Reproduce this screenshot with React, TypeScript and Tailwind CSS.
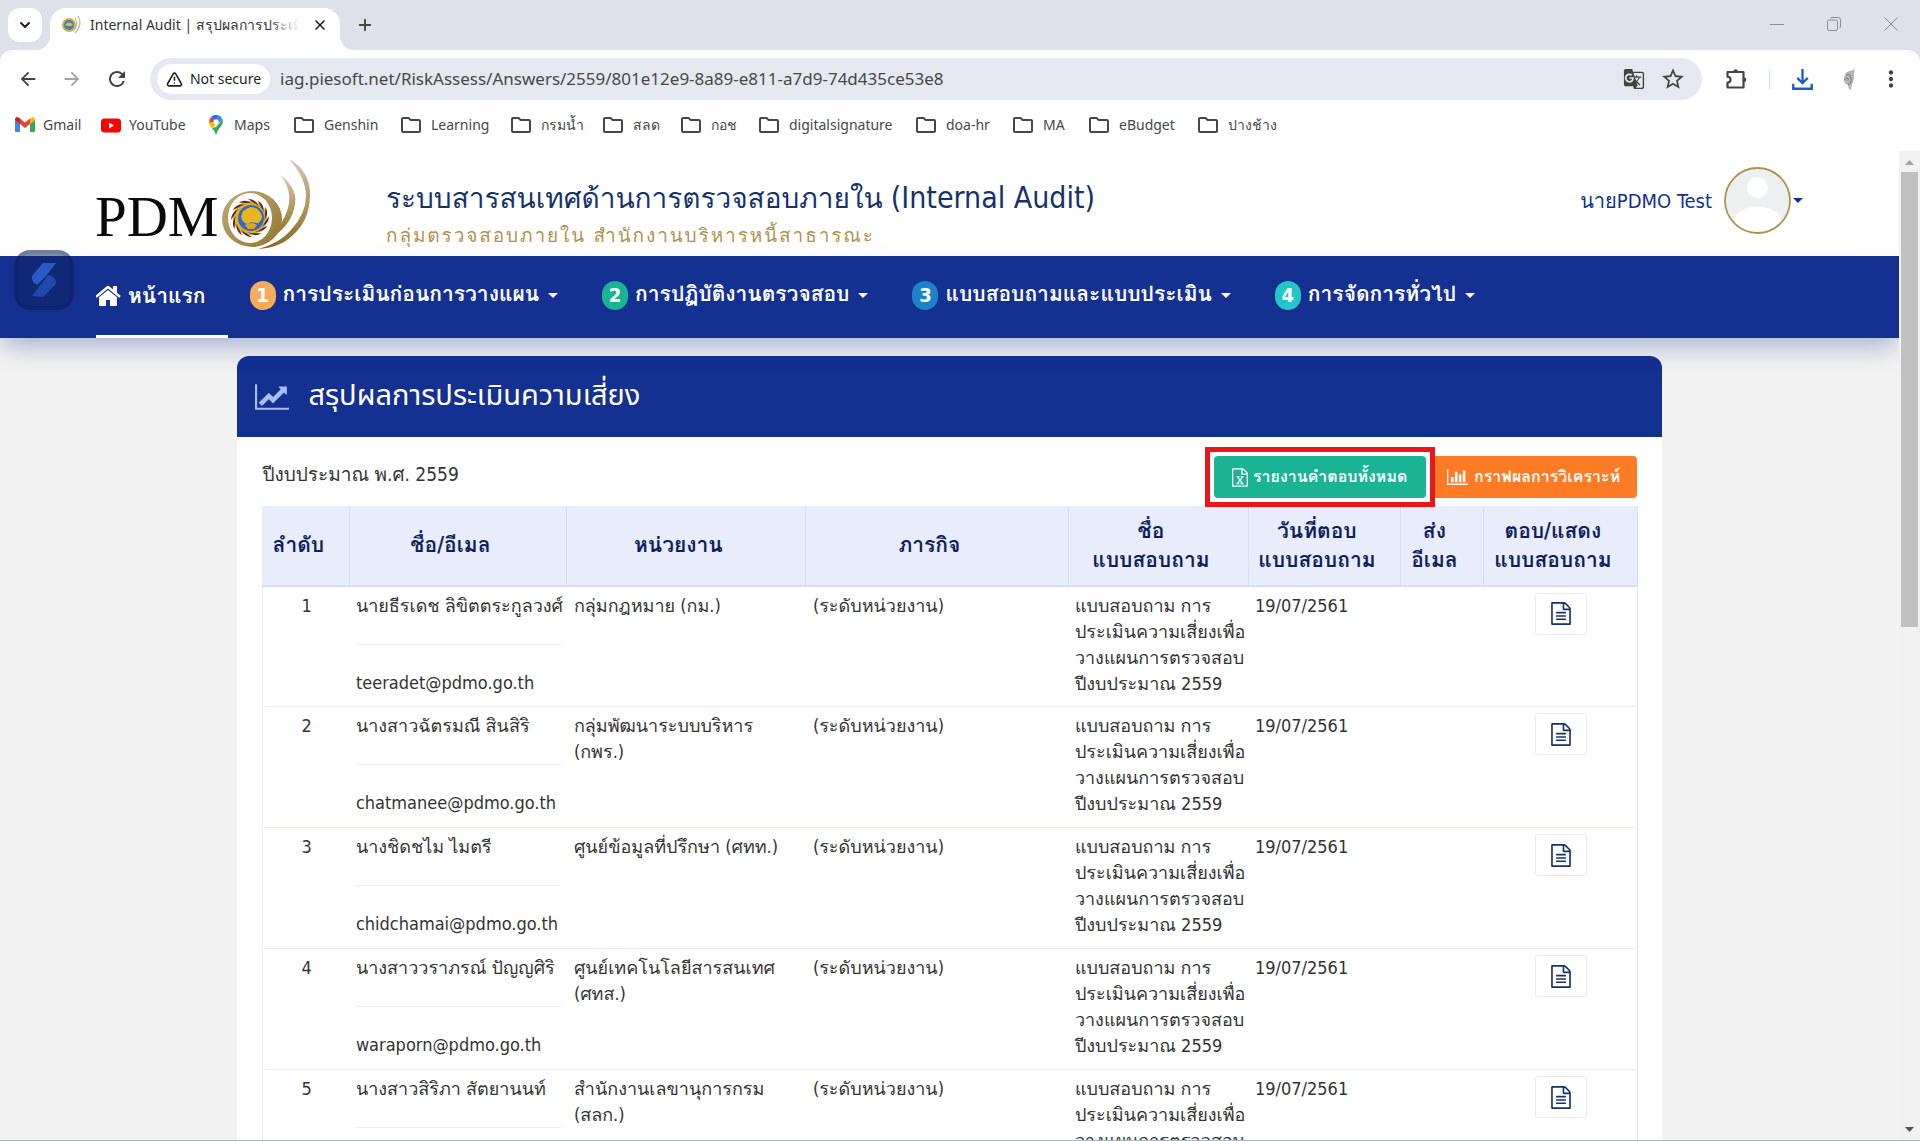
import type { ReactNode } from "react";
import {
  MdArrowBack,
  MdArrowForward,
  MdGTranslate,
  MdMoreVert,
  MdOutlineFolder,
  MdRefresh,
  MdStarBorder,
} from "react-icons/md";
import { LuTriangleAlert, LuX, LuPlus, LuChevronDown } from "react-icons/lu";

const UI = "font-['Noto_Sans',sans-serif]";
const PAGE = "font-['DejaVu_Sans_Condensed','Loma',sans-serif]";

const FILE_OUTLINE =
  "M1596 380q28 28 48 76t20 88v1152q0 40-28 68t-68 28h-1344q-40 0-68-28t-28-68v-1600q0-40 28-68t68-28h896q40 0 88 20t76 48zm-444-244v376h376q-10-29-22-41l-313-313q-12-12-41-22zm384 1528v-1024h-416q-40 0-68-28t-28-68v-416h-768v1536h1280z";

function Glyph({ d, box, className }: { d: string; box: string; className: string }) {
  return (
    <svg viewBox={box} className={className} fill="currentColor" aria-hidden="true">
      <path d={d} />
    </svg>
  );
}

const HomeIcon = () => (
  <Glyph
    box="64 190 1664 1300"
    className="h-[22px] w-[26px]"
    d="M1408 992v480q0 26-19 45t-45 19h-384v-384h-256v384h-384q-26 0-45-19t-19-45v-480q0-1 .5-3t.5-3l575-474 575 474q1 2 1 6zm223-69l-62 74q-8 9-21 11h-3q-13 0-21-7l-692-577-692 577q-12 8-24 7-13-2-21-11l-62-74q-8-10-7-23.5t11-21.5l719-599q32-26 76-26t76 26l244 204v-195q0-14 9-23t23-9h192q14 0 23 9t9 23v408l219 182q10 8 11 21.5t-7 23.5z"
  />
);
const LineChartIcon = () => (
  <Glyph
    box="0 128 2048 1536"
    className="h-[26px] w-[34px] text-[#a9bdf5]"
    d="M2048 1536v128h-2048v-1536h128v1408h1920zm-128-1248v435q0 21-19.5 29.5t-35.5-7.5l-121-121-633 633q-10 10-23 10t-23-10l-233-233-416 416-192-192 585-585q10-10 23-10t23 10l233 233 464-464-121-121q-16-16-7.5-35.5t29.5-19.5h435q14 0 23 9t9 23z"
  />
);
const ExcelIcon = () => (
  <Glyph
    box="128 0 1536 1792"
    className="h-[19px] w-4"
    d={
      FILE_OUTLINE +
      "m-979-234v106h281v-106h-75l103-161q5-7 10-16.5t7.5-13.5 3.5-4h2q1 4 5 10 2 4 4.5 7.5t6 8 6.5 8.5l107 161h-76v106h291v-106h-68l-192-273 195-282h67v-107h-279v107h74l-103 159q-4 7-10 16.5t-9 13.5l-2 3h-2q-1-4-5-10-6-11-17-23l-106-159h76v-107h-290v107h68l189 272-194 283h-68z"
    }
  />
);
const BarChartIcon = () => (
  <Glyph
    box="0 128 2048 1536"
    className="h-4 w-[21px]"
    d="M640 896v512h-256v-512h256zm384-512v1024h-256v-1024h256zm1024 1152v128h-2048v-1536h128v1408h1920zm-640-896v768h-256v-768h256zm384-384v1152h-256v-1152h256z"
  />
);
const FileTextIcon = () => (
  <Glyph
    box="128 0 1536 1792"
    className="h-[23px] w-5"
    d={
      FILE_OUTLINE +
      "m-1024-864q0-14 9-23t23-9h704q14 0 23 9t9 23v64q0 14-9 23t-23 9h-704q-14 0-23-9t-9-23v-64zm736 224q14 0 23 9t9 23v64q0 14-9 23t-23 9h-704q-14 0-23-9t-9-23v-64q0-14 9-23t23-9h704zm0 256q14 0 23 9t9 23v64q0 14-9 23t-23 9h-704q-14 0-23-9t-9-23v-64q0-14 9-23t23-9h704z"
    }
  />
);

const Caret = () => (
  <svg viewBox="0 0 10 5" className="h-[5px] w-[10px]" fill="currentColor" aria-hidden="true">
    <path d="M0 0h10L5 5z" />
  </svg>
);

function Favicon() {
  return (
    <svg viewBox="0 0 20 20" className="size-5 shrink-0" aria-hidden="true">
      <circle cx="8" cy="10" r="7" fill="#c9b548" />
      <circle cx="8" cy="10" r="5" fill="#4a7fb5" />
      <path d="M4 10q4-5 8 0q-4 2-8 0z" fill="#e0c23a" />
      <path d="M14 3q4 7-2 13M17 1q5 9-3 17" fill="none" stroke="#cdb98a" strokeWidth="1.3" />
    </svg>
  );
}

function TabStrip() {
  return (
    <div className="flex h-[50px] shrink-0 items-start bg-[#dee1e9] pl-2 pt-2">
      <button aria-label="Search tabs" className="flex size-[34px] items-center justify-center rounded-xl bg-white">
        <LuChevronDown className="size-4 text-[#1f1f1f]" strokeWidth={3} />
      </button>
      <div className="relative ml-2 flex h-[42px] w-[290px] items-center rounded-t-2xl bg-white pl-[11px] pr-3 pb-2">
        <svg viewBox="0 0 14 14" className="absolute -left-[14px] bottom-0 size-[14px]" aria-hidden="true">
          <path d="M14 0v14H0A14 14 0 0 0 14 0z" fill="#fff" />
        </svg>
        <svg viewBox="0 0 14 14" className="absolute -right-[14px] bottom-0 size-[14px]" aria-hidden="true">
          <path d="M0 0v14h14A14 14 0 0 1 0 0z" fill="#fff" />
        </svg>
        <Favicon />
        <div className="relative ml-[9px] w-[210px] overflow-hidden whitespace-nowrap text-sm leading-8 text-[#333]">
          Internal Audit | สรุปผลการประเมินความเสี่ยง
          <div className="absolute inset-y-0 right-0 w-8 bg-linear-to-r from-white/0 to-white" />
        </div>
        <button aria-label="Close tab" className="ml-3">
          <LuX className="size-4 text-[#1f1f1f]" strokeWidth={2.5} />
        </button>
      </div>
      <button aria-label="New tab" className="ml-4 mt-2">
        <LuPlus className="size-[18px] text-[#444]" strokeWidth={2.5} />
      </button>
      <div className="ml-auto mr-[22px] mt-[9px] flex items-center gap-[43px] text-[#8a8c91]">
        <button aria-label="Minimize">
          <svg viewBox="0 0 14 14" className="size-[14px]" aria-hidden="true">
            <path d="M0 7.5h14" stroke="currentColor" />
          </svg>
        </button>
        <button aria-label="Restore">
          <svg viewBox="0 0 14 14" className="size-[14px]" fill="none" stroke="currentColor" aria-hidden="true">
            <rect x=".5" y="3" width="10" height="10.5" rx="1.5" />
            <path d="M3 1.500q.5-1 2-1h6q2.500 0 2.500 2.500v6q0 1.500-1 2" />
          </svg>
        </button>
        <button aria-label="Close">
          <svg viewBox="0 0 14 14" className="size-[14px]" fill="none" stroke="currentColor" aria-hidden="true">
            <path d="M.5 .5l13 13M13.500 .5l-13 13" />
          </svg>
        </button>
      </div>
    </div>
  );
}

function Toolbar() {
  return (
    <div className="flex h-[58px] shrink-0 items-center rounded-t-xl bg-white pl-[17px] text-[#444]">
      <button aria-label="Back">
        <MdArrowBack className="size-[22px]" />
      </button>
      <button aria-label="Forward" className="ml-[22px] text-[#a5a5a5]">
        <MdArrowForward className="size-[22px]" />
      </button>
      <button aria-label="Reload" className="ml-[22px]">
        <MdRefresh className="size-6" />
      </button>
      <div className="ml-[21px] flex h-[42px] flex-1 items-center rounded-full bg-[#e5e7f1] pl-[7px] pr-4">
        <button className="flex h-[30px] w-[113px] shrink-0 items-center justify-center gap-[7px] rounded-full bg-white text-sm text-[#1f1f1f]">
          <LuTriangleAlert className="size-[17px]" strokeWidth={2.2} />
          Not secure
        </button>
        <input
          aria-label="Address"
          readOnly
          className="ml-[10px] min-w-0 flex-1 bg-transparent text-[17px] text-[#474747] outline-none"
          value="iag.piesoft.net/RiskAssess/Answers/2559/801e12e9-8a89-e811-a7d9-74d435ce53e8"
        />
        <button aria-label="Translate">
          <MdGTranslate className="size-[22px]" />
        </button>
        <button aria-label="Bookmark" className="ml-[15px]">
          <MdStarBorder className="size-[26px]" />
        </button>
      </div>
      <div className="flex w-[218px] items-center pl-[22px]">
        <button aria-label="Extensions">
          <svg viewBox="0 0 24 24" className="size-6" fill="none" stroke="currentColor" strokeWidth="2.2" strokeLinejoin="round" aria-hidden="true">
            <path d="M3.500 5h16v15.500h-16v-4.800q3-.3 3-3t-3-3z" />
            <path d="M9.300 4.500a2.300 2.300 0 0 1 4.600 0zM20 10.500a2.300 2.300 0 0 1 0 4.600z" fill="currentColor" stroke="none" />
          </svg>
        </button>
        <div className="ml-[21px] h-5 w-px bg-[#cfe0fc]" />
        <button aria-label="Downloads" className="ml-[22px] text-[#1b5cc4]">
          <svg viewBox="0 0 20 20" className="size-[21px]" fill="none" stroke="currentColor" strokeWidth="2.2" aria-hidden="true">
            <path d="M10 0v13M5 8.500l5 5 5-5M1.200 14v4.800h17.600V14" />
          </svg>
        </button>
        <button aria-label="Profile" className="ml-7">
          <svg viewBox="0 0 16 24" className="h-6 w-4" aria-hidden="true">
            <path d="M14 1q-1 3-1 7-0 6-2 9l-1 6-2-1-1-4q-4-1-4-5Q3 6 8 4 12 4 14 1z" fill="#b5b5b5" />
            <path d="M5 8q4-2 5 3t-3 7M3 13q3-3 5-1" fill="none" stroke="#777" />
          </svg>
        </button>
        <button aria-label="Menu" className="ml-[21px]">
          <MdMoreVert className="size-[26px]" />
        </button>
      </div>
    </div>
  );
}

const bookmarks: [string, string][] = [
  ["Genshin", "w-[107px]"],
  ["Learning", "w-[110px]"],
  ["กรมน้ำ", "w-[92px]"],
  ["สลด", "w-[78px]"],
  ["กอช", "w-[78px]"],
  ["digitalsignature", "w-[157px]"],
  ["doa-hr", "w-[97px]"],
  ["MA", "w-[76px]"],
  ["eBudget", "w-[109px]"],
  ["ปางช้าง", "w-[80px]"],
];

function Bookmark({ icon, label, width }: { icon: ReactNode; label: string; width: string }) {
  return (
    <a href="#" className={`flex items-center gap-2 whitespace-nowrap ${width}`}>
      {icon}
      {label}
    </a>
  );
}

function BookmarkBar() {
  return (
    <nav className="flex h-[43px] shrink-0 items-start bg-white pl-[15px] pt-[5px] text-sm leading-6 text-[#474747]">
      <Bookmark
        label="Gmail"
        width="w-[86px]"
        icon={
          <svg viewBox="0 0 20 16" className="h-4 w-5" aria-hidden="true">
            <path d="M0 2v12q0 1 1.500 1H5V6.500L0 2.500z" fill="#4285f4" />
            <path d="M20 2v12q0 1-1.500 1H15V6.500l5-4z" fill="#34a853" />
            <path d="M5 7V1.500l5 4 5-4V7l-5 4z" fill="#ea4335" />
            <path d="M0 2Q1-1 3.500 .5L5 1.600V7L0 3.200z" fill="#c5221f" />
            <path d="M20 2q-1-3-3.500-1.500L15 1.600V7l5-3.800z" fill="#fbbc04" />
          </svg>
        }
      />
      <Bookmark
        label="YouTube"
        width="w-[105px]"
        icon={
          <svg viewBox="0 0 20 14" className="h-[15px] w-5" aria-hidden="true">
            <rect width="20" height="14" rx="3.500" fill="#f00" />
            <path d="M8 4l5 3-5 3z" fill="#fff" />
          </svg>
        }
      />
      <Bookmark
        label="Maps"
        width="w-[86px]"
        icon={
          <span className="flex w-5 justify-center">
            <svg viewBox="0 0 16 20" className="h-5 w-4 shrink-0" aria-hidden="true">
              <path d="M4 13q3 3 4 7 1-4 4-7.500Q16 8 14.600 4.500L8 12z" fill="#34a853" />
              <path d="M14.700 5Q13 1 10 .3L5 5l4 4z" fill="#4285f4" />
              <path d="M10 .3Q6-1 3 2l4 4z" fill="#1a73e8" />
              <path d="M3 2Q1 4 1 7.500L4.500 11l3-5z" fill="#ea4335" />
              <path d="M1 7.200Q1 10.500 4 13.500l3.500-4-3-2.500z" fill="#fbbc04" />
              <circle cx="8" cy="6.800" r="2.600" fill="#fff" />
            </svg>
          </span>
        }
      />
      {bookmarks.map(([label, width]) => (
        <Bookmark key={label} label={label} width={width} icon={<MdOutlineFolder className="size-6 shrink-0" />} />
      ))}
    </nav>
  );
}

const petals = [0, 30, 60, 90, 120, 150, 180, 210, 240, 270, 300, 330];

function Logo() {
  return (
    <svg viewBox="6 0 224 106" className="h-[106px] w-56 shrink-0" role="img" aria-label="PDMO">
      <defs>
        <linearGradient id="gold" x1="0" y1="0" x2="0" y2="1">
          <stop offset="0" stopColor="#d9c8c4" />
          <stop offset=".4" stopColor="#b7a06c" />
          <stop offset="1" stopColor="#8a6b22" />
        </linearGradient>
        <linearGradient id="ring" x1="0" y1="0" x2="1" y2="1">
          <stop offset="0" stopColor="#c2ad78" />
          <stop offset="1" stopColor="#93742f" />
        </linearGradient>
      </defs>
      <text x="5" y="85" fontSize="57" fill="#0a0a0a" fontFamily="Liberation Serif, serif">
        PDM
      </text>
      <path d="M199 8Q221 20 220 46Q219 70 203 84Q190 97 168 98Q190 92 201 79Q232 45 199 8z" fill="url(#gold)" />
      <path d="M190 24Q210 38 204 58Q200 76 176 91Q187 80 193 69Q207 44 190 24z" fill="url(#gold)" />
      <ellipse cx="162" cy="68" rx="30" ry="28" fill="url(#ring)" />
      <ellipse cx="160" cy="67" rx="22" ry="25" fill="#fff" />
      <circle cx="160" cy="67" r="17" fill="#e3b21c" />
      {petals.map((a) => (
        <path
          key={a}
          d="M158 48q8 0 11 8q-2-3-5-4q-3-2-6-4z"
          fill="#5a2238"
          transform={`rotate(${a} 160 67)`}
        />
      ))}
      <circle cx="161" cy="67" r="13" fill="#2f6ac8" />
      <path d="M151 66q1-8 10-10 9 1 11 10-2 7-6 6-6-2-8 1-5 0-7-7z" fill="#e8b520" />
      <path d="M155 74q6-4 12 0l-3 4h-6z" fill="#d8a81c" />
    </svg>
  );
}

function SiteHeader() {
  return (
    <header className="flex h-[105px] shrink-0 items-start bg-white px-24 text-[#17316b]">
      <Logo />
      <div className="ml-[66px] pt-[27px]">
        <h1 className="text-[28px] leading-10">
          ระบบสารสนเทศด้านการตรวจสอบภายใน <span className="text-[30px]">(Internal Audit)</span>
        </h1>
        <p className="text-[19px] leading-8 tracking-widest text-[#b0924f]">
          กลุ่มตรวจสอบภายใน สำนักงานบริหารหนี้สาธารณะ
        </p>
      </div>
      <button className="ml-auto mt-4 flex items-center text-xl text-[#143091]">
        นายPDMO Test
        <svg viewBox="0 0 67 67" className="ml-3 mr-0.5 size-[67px]" aria-hidden="true">
          <clipPath id="face">
            <circle cx="33.500" cy="33.500" r="32" />
          </clipPath>
          <circle cx="33.500" cy="33.500" r="32.500" fill="#ecf0f1" />
          <g clipPath="url(#face)" fill="#fff">
            <circle cx="33.500" cy="20.500" r="10.500" />
            <path d="M10 67V54q1-8 10-12 13-5 27 0 9 4 10 12v13z" />
          </g>
          <circle cx="33.500" cy="33.500" r="32.500" fill="none" stroke="#b0924f" strokeWidth="1.800" />
        </svg>
        <Caret />
      </button>
    </header>
  );
}

const menus = [
  { n: 1, color: "bg-[#f8ac59]", label: "การประเมินก่อนการวางแผน" },
  { n: 2, color: "bg-[#1ab394]", label: "การปฏิบัติงานตรวจสอบ" },
  { n: 3, color: "bg-[#1c84c6]", label: "แบบสอบถามและแบบประเมิน" },
  { n: 4, color: "bg-[#23c6c8]", label: "การจัดการทั่วไป" },
];

function MainNav() {
  return (
    <nav className="relative z-10 flex h-[82px] shrink-0 bg-[#143091] px-24 text-[21px] font-semibold text-white shadow-[0_12px_24px_-4px_rgba(20,48,145,0.35)]">
      <a href="#" className="flex items-center gap-1.5 border-b-[3px] border-white pr-[22px] pt-[3px]">
        <span className="pb-1">
          <HomeIcon />
        </span>
        หน้าแรก
      </a>
      {menus.map((m) => (
        <button key={m.n} className="flex items-center px-[22px] pb-1">
          <span className={`mr-[7px] flex h-[29px] w-[26px] items-center justify-center rounded-full text-xl ${m.color}`}>
            {m.n}
          </span>
          {m.label}
          <span className="ml-[9px]">
            <Caret />
          </span>
        </button>
      ))}
      <div className="absolute -top-1.5 left-[14px] flex size-[60px] items-center justify-center rounded-2xl border-4 border-[#0c1d58]/15 bg-[#0c1f5c]/50">
        <svg viewBox="0 0 26 36" className="h-9 w-[26px]" aria-hidden="true">
          <path d="M12 1h13L15 14 6 23Q0 20 1 14z" fill="#2a5bc4" />
          <path d="M17 13q9 2 8 9L12 35 1 34l10-13z" fill="#2149ad" />
        </svg>
      </div>
    </nav>
  );
}

const columns: { label: ReactNode; width: string }[] = [
  { label: "ลำดับ", width: "w-[87px]" },
  { label: "ชื่อ/อีเมล", width: "w-[217px]" },
  { label: "หน่วยงาน", width: "w-[239px]" },
  { label: "ภารกิจ", width: "w-[263px]" },
  { label: <>ชื่อ<br />แบบสอบถาม</>, width: "w-[180px]" },
  { label: <>วันที่ตอบ<br />แบบสอบถาม</>, width: "w-[152px]" },
  { label: <>ส่ง<br />อีเมล</>, width: "w-[83px]" },
  { label: <>ตอบ/แสดง<br />แบบสอบถาม</>, width: "w-[154px]" },
];

const rows: { name: string; email?: string; unit: ReactNode }[] = [
  { name: "นายธีรเดช ลิขิตตระกูลวงศ์", email: "teeradet@pdmo.go.th", unit: "กลุ่มกฎหมาย (กม.)" },
  { name: "นางสาวฉัตรมณี สินสิริ", email: "chatmanee@pdmo.go.th", unit: <>กลุ่มพัฒนาระบบบริหาร<br />(กพร.)</> },
  { name: "นางชิดชไม ไมตรี", email: "chidchamai@pdmo.go.th", unit: "ศูนย์ข้อมูลที่ปรึกษา (ศทท.)" },
  { name: "นางสาววราภรณ์ ปัญญศิริ", email: "waraporn@pdmo.go.th", unit: <>ศูนย์เทคโนโลยีสารสนเทศ<br />(ศทส.)</> },
  { name: "นางสาวสิริภา สัตยานนท์", unit: <>สำนักงานเลขานุการกรม<br />(สลก.)</> },
];

function ResultTable() {
  return (
    <table className="mt-2 w-full table-fixed border-collapse border border-[#e7ebfb] text-lg leading-[26px] text-[#333]">
      <thead>
        <tr className="h-[79px] border-b-2 border-[#d3dcf8] bg-[#e8ecfb] text-[21px] leading-[29px] text-[#0f1f5c]">
          {columns.map((c, i) => (
            <th key={i} className={`border-r border-[#d3dcf8] pl-1 pr-5 font-bold whitespace-nowrap ${c.width}`}>
              {c.label}
            </th>
          ))}
        </tr>
      </thead>
      <tbody>
        {rows.map((r, i) => (
          <tr key={r.name} className="h-[121px] border-b border-[#e7ebfb] align-top whitespace-nowrap">
            <td className="pt-1.5 text-center">{i + 1}</td>
            <td className="px-1.5 pt-1.5">
              {r.name}
              <hr className="my-[25px] border-[#eee]" />
              {r.email}
            </td>
            <td className="px-[7px] pt-1.5">{r.unit}</td>
            <td className="px-[7px] pt-1.5">(ระดับหน่วยงาน)</td>
            <td className="px-1.5 pt-1.5">
              แบบสอบถาม การ
              <br />
              ประเมินความเสี่ยงเพื่อ
              <br />
              วางแผนการตรวจสอบ
              <br />
              ปีงบประมาณ 2559
            </td>
            <td className="px-1.5 pt-1.5">19/07/2561</td>
            <td />
            <td className="pt-1.5">
              <button
                aria-label="แสดงแบบสอบถาม"
                className="mx-auto flex h-[42px] w-[52px] items-center justify-center rounded-[3px] border border-[#e7eaec] bg-white text-[#17316b]"
              >
                <FileTextIcon />
              </button>
            </td>
          </tr>
        ))}
      </tbody>
    </table>
  );
}

function Scrollbar() {
  return (
    <div className="flex w-[21px] shrink-0 flex-col items-center bg-[#f1f1f1]" aria-hidden="true">
      <svg viewBox="0 0 21 21" className="size-[21px]">
        <path d="M6 14h9l-4.500-5z" fill="#a3a3a3" />
      </svg>
      <div className="h-[46%] w-[17px] bg-[#c1c1c1]" />
      <svg viewBox="0 0 21 21" className="mt-auto size-[21px]">
        <path d="M6 8h9l-4.500 5z" fill="#505050" />
      </svg>
    </div>
  );
}

export default function App() {
  return (
    <div className={`flex h-screen flex-col overflow-hidden border-b border-[#a9b8b8] bg-white ${UI}`}>
      <TabStrip />
      <div className="shrink-0 bg-[#dee1e9]">
        <Toolbar />
      </div>
      <BookmarkBar />
      <div className="flex min-h-0 flex-1">
        <div className={`flex min-w-0 flex-1 flex-col overflow-hidden bg-[#f2f2f2] ${PAGE}`}>
          <SiteHeader />
          <MainNav />
          <main className="mx-auto mt-[18px] w-3/4 shrink-0 overflow-hidden rounded-t-xl bg-white">
            <h2 className="flex h-[81px] items-center gap-[19px] bg-[#143091] px-[18px] font-['Noto_Sans_Thai',sans-serif] text-[29px] font-normal text-white">
              <LineChartIcon />
              สรุปผลการประเมินความเสี่ยง
            </h2>
            <div className="px-[25px] pt-[19px]">
              <div className="flex h-[42px] items-center">
                <p className="pb-1.5 text-[19px] text-[#333]">ปีงบประมาณ พ.ศ. 2559</p>
                <div className="relative z-10 ml-auto">
                  <button className="flex h-[42px] w-[212px] items-center justify-center gap-[5px] rounded bg-[#1ab394] text-base font-semibold whitespace-nowrap text-white">
                    <ExcelIcon />
                    รายงานคำตอบทั้งหมด
                  </button>
                  <div className="pointer-events-none absolute -inset-[9px] border-[5px] border-[#e81818]" />
                </div>
                <button className="ml-[5px] flex h-[42px] w-[206px] items-center justify-center gap-1.5 rounded bg-[#fc7b24] text-base font-semibold whitespace-nowrap text-white">
                  <BarChartIcon />
                  กราฟผลการวิเคราะห์
                </button>
              </div>
              <ResultTable />
            </div>
          </main>
        </div>
        <Scrollbar />
      </div>
    </div>
  );
}
